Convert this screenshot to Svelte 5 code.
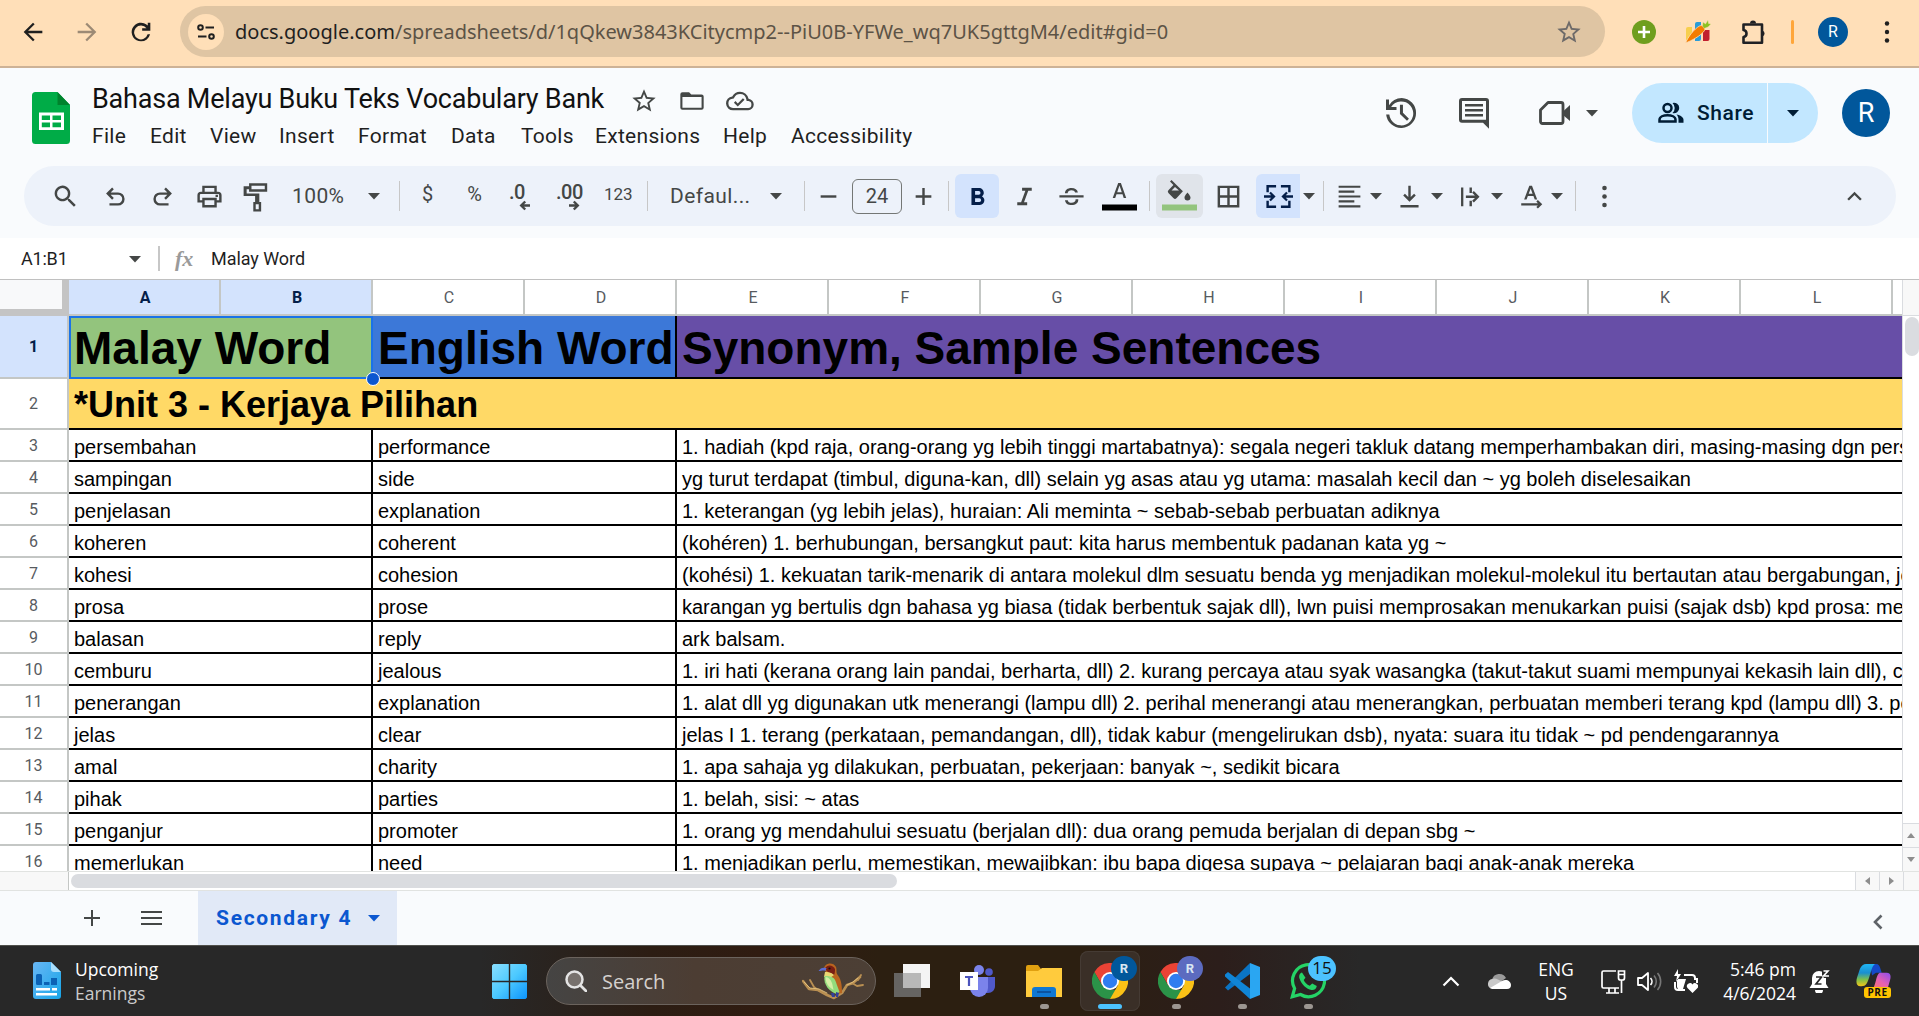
<script>
  const menus = ['File', 'Edit', 'View', 'Insert', 'Format', 'Data', 'Tools', 'Extensions', 'Help', 'Accessibility'];
  const columns = ['A', 'B', 'C', 'D', 'E', 'F', 'G', 'H', 'I', 'J', 'K', 'L'];
  const rows = [
    ['persembahan', 'performance', '1. hadiah (kpd raja, orang-orang yg lebih tinggi martabatnya): segala negeri takluk datang memperhambakan diri, masing-masing dgn perse'],
    ['sampingan', 'side', 'yg turut terdapat (timbul, diguna-kan, dll) selain yg asas atau yg utama: masalah kecil dan ~ yg boleh diselesaikan'],
    ['penjelasan', 'explanation', '1. keterangan (yg lebih jelas), huraian: Ali meminta ~ sebab-sebab perbuatan adiknya'],
    ['koheren', 'coherent', '(kohéren) 1. berhubungan, bersangkut paut: kita harus membentuk padanan kata yg ~'],
    ['kohesi', 'cohesion', '(kohési) 1. kekuatan tarik-menarik di antara molekul dlm sesuatu benda yg menjadikan molekul-molekul itu bertautan atau bergabungan, je'],
    ['prosa', 'prose', 'karangan yg bertulis dgn bahasa yg biasa (tidak berbentuk sajak dll), lwn puisi memprosakan menukarkan puisi (sajak dsb) kpd prosa: mem'],
    ['balasan', 'reply', 'ark balsam.'],
    ['cemburu', 'jealous', '1. iri hati (kerana orang lain pandai, berharta, dll) 2. kurang percaya atau syak wasangka (takut-takut suami mempunyai kekasih lain dll), ce'],
    ['penerangan', 'explanation', '1. alat dll yg digunakan utk menerangi (lampu dll) 2. perihal menerangi atau menerangkan, perbuatan memberi terang kpd (lampu dll) 3. pe'],
    ['jelas', 'clear', 'jelas I 1. terang (perkataan, pemandangan, dll), tidak kabur (mengelirukan dsb), nyata: suara itu tidak ~ pd pendengarannya'],
    ['amal', 'charity', '1. apa sahaja yg dilakukan, perbuatan, pekerjaan: banyak ~, sedikit bicara'],
    ['pihak', 'parties', '1. belah, sisi: ~ atas'],
    ['penganjur', 'promoter', '1. orang yg mendahului sesuatu (berjalan dll): dua orang pemuda berjalan di depan sbg ~'],
    ['memerlukan', 'need', '1. menjadikan perlu, memestikan, mewajibkan: ibu bapa digesa supaya ~ pelajaran bagi anak-anak mereka']
  ];
</script>

{#snippet caret()}
  <svg class="caret" viewBox="0 0 14 14"><path d="M1 4h12l-6 6.500z" /></svg>
{/snippet}

{#snippet chromeIcon()}
  <svg class="app" viewBox="0 0 36 36">
    <path fill="#ea4335" d="M2.400 9 10.200 22.500 18 9h15.600A18 18 0 0 0 2.400 9z" />
    <path fill="#2b9348" d="M2.400 9 10.200 22.500 18 27h7.800L18 36A18 18 0 0 1 2.400 9z" />
    <path fill="#fbc116" d="M18 9h15.600A18 18 0 0 1 18 36l7.800-13.500z" />
    <circle cx="18" cy="18" r="9" fill="#fff" /><circle cx="18" cy="18" r="7.200" fill="#2f7df0" />
  </svg>
{/snippet}

<div class="page">
  <header class="browser">
    <svg class="b-ic" viewBox="0 0 24 24"><path d="M20 11H7.800l5.600-5.600L12 4l-8 8 8 8 1.400-1.400L7.800 13H20z" /></svg>
    <svg class="b-ic dim" viewBox="0 0 24 24"><path d="M4 11h12.200l-5.600-5.600L12 4l8 8-8 8-1.400-1.400 5.600-5.600H4z" /></svg>
    <svg class="b-ic" viewBox="0 0 24 24"><path d="M12 20a8 8 0 1 1 5.800-13.500V4H20v7h-7V8.800h3.700A5.900 5.900 0 1 0 17.700 14h2.100A8 8 0 0 1 12 20z" /></svg>
    <div class="omnibox">
      <span class="site">
        <svg viewBox="0 0 20 20"><g fill="none" stroke="#202020" stroke-width="2"><circle cx="4.500" cy="5.500" r="2.300" /><circle cx="15.500" cy="14.500" r="2.300" /><path d="M9.500 5.500H18M2 14.500h8.500" /></g></svg>
      </span>
      <span class="url"><b>docs.google.com</b>/spreadsheets/d/1qQkew3843KCitycmp2--PiU0B-YFWe_wq7UK5gttgM4/edit#gid=0</span>
      <svg class="star" viewBox="0 0 24 24"><path d="M22 9.240l-7.190-.620L12 2 9.190 8.630 2 9.240l5.460 4.730L5.820 21 12 17.270 18.180 21l-1.630-7.030zM12 15.400l-3.760 2.270 1-4.280-3.320-2.880 4.380-.380L12 6.100l1.710 4.040 4.380.380-3.320 2.880 1 4.280z" /></svg>
    </div>
    <svg class="e-plus" viewBox="0 0 24 24"><circle cx="12" cy="12" r="12" fill="#6f9e1e" /><path d="M12 6v12M6 12h12" stroke="#fff" stroke-width="2.600" /></svg>
    <svg class="e-car" viewBox="0 0 26 24">
      <path fill="#f7cf4e" d="M1 9a2 2 0 0 1 2-2h4v13H1z" /><path fill="#2a9cd8" d="M10 4a2 2 0 0 1 2-2h4v17a2 2 0 0 1-2 2h-4z" /><path fill="#c11f2e" d="M18 10h6.500v9a2 2 0 0 1-2 2H18z" />
      <path fill="#f57c00" stroke="#fde0ba" stroke-width=".8" d="M.500 23C3 17 9 9 14.500 6c3-1.500 6.500 1.500 5 4.500C16.500 15.500 6 21 .500 23z" /><path fill="#8cc220" stroke="#fde0ba" stroke-width=".4" d="M17.500 6l.500-4 2.500 2L23 0l.500 3.500L26 4l-3 3-4 1.500z" />
    </svg>
    <svg class="e-puz" viewBox="0 0 26 26"><path d="M2.500 5.500H21v18.300H2.500V18c4-.500 4-6.500 0-7z" fill="none" stroke="#202124" stroke-width="2.600" stroke-linejoin="round" /><path fill="#202124" d="M9 4.500a3 3 0 0 1 6 0zM21.500 11.500a3.200 3.200 0 0 1 0 6z" /></svg>
    <i class="b-sep"></i>
    <span class="b-ava">R</span>
    <svg class="b-dots" viewBox="0 0 6 28"><circle cx="3" cy="5.500" r="2.200" /><circle cx="3" cy="14" r="2.200" /><circle cx="3" cy="22.500" r="2.200" /></svg>
  </header>

  <section class="docs">
    <svg class="logo" viewBox="0 0 38 52"><path fill="#00ac47" d="M3.500 0H25.500L38 13v35.500a3.500 3.500 0 0 1-3.500 3.500h-31A3.500 3.500 0 0 1 0 48.500v-45A3.500 3.500 0 0 1 3.500 0z" /><path fill="#00832d" d="M25.500 0 38 13H25.500z" /><path fill="#fff" d="M7 20.500h25v17.500H7z" /><path fill="#00ac47" d="M9.800 23.400h8.200v4.700H9.800zM20.500 23.400h8.500v4.700h-8.500zM9.800 30.500h8.200v4.700H9.800zM20.500 30.500h8.500v4.700h-8.500z" /></svg>
    <div class="naming">
      <div class="title-row">
        <h1>Bahasa Melayu Buku Teks Vocabulary Bank</h1>
        <svg viewBox="0 0 24 24"><path d="M22 9.240l-7.190-.620L12 2 9.190 8.630 2 9.240l5.460 4.730L5.820 21 12 17.270 18.180 21l-1.630-7.030zM12 15.400l-3.760 2.270 1-4.280-3.320-2.880 4.380-.380L12 6.100l1.710 4.040 4.380.380-3.320 2.880 1 4.280z" /></svg>
        <svg viewBox="0 0 24 24"><path d="M9.500 4.500H3.800A1.800 1.800 0 0 0 2 6.300v11.400a1.800 1.800 0 0 0 1.800 1.800h16.400a1.800 1.800 0 0 0 1.800-1.800V8.200a1.800 1.800 0 0 0-1.800-1.800h-8.800zM20.200 17.700H3.800V8.500h16.400z" /></svg>
        <svg class="wide" viewBox="0 0 24 24"><path d="M19.350 10.040A7.490 7.490 0 0 0 12 4a7.500 7.500 0 0 0-6.650 4.040A6 6 0 0 0 6 20h13a5 5 0 0 0 .350-9.960zM19 18H6a4 4 0 0 1-.440-7.970l1.070-.110.500-.950A5.490 5.490 0 0 1 12 6a5.500 5.500 0 0 1 5.390 4.430l.300 1.500 1.530.110A3 3 0 0 1 19 18zm-8.900-3.900-2-2-1.300 1.400 3.300 3.300 5.800-5.800-1.400-1.400z" /></svg>
      </div>
      <nav>{#each menus as m}<span>{m}</span>{/each}</nav>
    </div>
    <div class="actions">
      <svg class="a-ic" viewBox="0 0 24 24"><path d="M12.500 2A10 10 0 0 0 4 6.900V3H2v7h7V8H5.400A8 8 0 1 1 4.200 13H2.100A10 10 0 1 0 12.500 2zM11.300 6.500v6.200l4.700 4.500 1.300-1.400-4-3.900V6.500z" /></svg>
      <svg class="a-ic" viewBox="0 0 24 24"><path d="M4 2a2 2 0 0 0-2 2v12.500a2 2 0 0 0 2 2h14l4 4V4a2 2 0 0 0-2-2zm0 2h16v12.500H4zM6 6h12v1.700H6zm0 3.300h12v1.700H6zm0 3.300h12v1.700H6z" /></svg>
      <svg class="a-meet" viewBox="0 0 32 26"><path d="M9 2.500h13a2 2 0 0 1 2 2v17a2 2 0 0 1-2 2H3.500a2 2 0 0 1-2-2V10z" fill="none" stroke="#444746" stroke-width="2.800" stroke-linejoin="round" /><path d="M24 11.500 31 5v16l-7-6z" /></svg>
      {@render caret()}
      <div class="share">
        <span class="share-main">
          <svg viewBox="0 0 26 22"><g fill="none" stroke="#001d35" stroke-width="2.500"><circle cx="9.500" cy="6" r="4" /><path d="M1.500 19.500v-1.700c0-3 4-4.500 8-4.500s8 1.500 8 4.500v1.700z" /></g><path fill="#001d35" d="M14.500.900a5.300 5.300 0 1 1 0 10.200 7 7 0 0 0 0-10.200zM18.500 12.400c4 .8 7 2.600 7 5.300v3h-5v-3c0-2-.7-4-2-5.300z" /></svg>
          Share
        </span>
        <span class="share-more">{@render caret()}</span>
      </div>
      <span class="avatar">R</span>
    </div>
  </section>

  <div class="toolbar">
    <svg class="ic" viewBox="0 0 24 24"><path d="M15.500 14h-.790l-.280-.270a6.500 6.500 0 1 0-.700.700l.270.280v.790l5 4.990L20.490 19zm-6 0a4.500 4.500 0 1 1 0-9 4.500 4.500 0 0 1 0 9z" /></svg>
    <svg class="ic" viewBox="0 0 24 24"><path d="M7 19.500v-2h7.100a3.400 3.400 0 0 0 0-6.900H8l2.600 2.600-1.400 1.400-5-5 5-5 1.400 1.400L8 8.600h6.100a5.400 5.400 0 0 1 0 10.900z" /></svg>
    <svg class="ic" viewBox="0 0 24 24"><path d="M17 19.500v-2H9.900a3.400 3.400 0 0 1 0-6.900H16l-2.600 2.600 1.400 1.400 5-5-5-5-1.400 1.400L16 8.600H9.900a5.400 5.400 0 0 0 0 10.900z" /></svg>
    <svg class="ic" viewBox="0 0 24 24"><path d="M19 8h-1V3H6v5H5a3 3 0 0 0-3 3v6h4v4h12v-4h4v-6a3 3 0 0 0-3-3zM8 5h8v3H8zm8 12.500V19H8v-4h8zm2-2.500v-2H6v2H4v-4c0-.600.400-1 1-1h14c.600 0 1 .400 1 1v4zM17 10.500h2v2h-2z" /></svg>
    <svg class="ic" viewBox="0 0 24 24"><path d="M7 1.500h15v7H7V6.500H5v3.500h10.500v7h1.500v8h-6.500v-8H12v-5H2.500V4H7zM9 3.500v3h11v-3zm3.500 15.500v4h2.500v-4z" transform="translate(.5 -.5)" /></svg>
    <span class="zoom">100%</span>
    {@render caret()}
    <i class="sep"></i>
    <span class="num c">$</span>
    <span class="num c">%</span>
    <svg class="ic" viewBox="0 0 29 29"><text x="2" y="16.500" class="dec">.0</text><path d="M23 23.500H14m4.200-4-4 4 4 4" fill="none" stroke="#444746" stroke-width="2.400" /></svg>
    <svg class="ic" viewBox="0 0 29 29"><text x="1" y="16.500" class="dec">.00</text><path d="M14 23.500h9m-4.200-4 4 4-4 4" fill="none" stroke="#444746" stroke-width="2.400" /></svg>
    <span class="num s">123</span>
    <i class="sep"></i>
    <span class="zoom">Defaul...</span>
    {@render caret()}
    <i class="sep"></i>
    <svg class="ic" viewBox="0 0 24 24"><path d="M5.500 11h13v2h-13z" /></svg>
    <span class="size">24</span>
    <svg class="ic" viewBox="0 0 24 24"><path d="M5.500 11H11V5h2v6h5.500v2H13v6h-2v-6H5.500z" /></svg>
    <i class="sep"></i>
    <span class="btn on"><svg class="ic" viewBox="0 0 24 24"><path d="M15.600 11.800c1-.7 1.600-1.800 1.600-2.800 0-2.300-1.700-4-4-4H7v14h7c2.100 0 3.700-1.700 3.700-3.800 0-1.500-.9-2.800-2.100-3.400zM10 7.500h3a1.500 1.500 0 0 1 0 3h-3zm3.500 9H10v-3h3.500a1.500 1.500 0 0 1 0 3z" /></svg></span>
    <svg class="ic" viewBox="0 0 24 24"><path d="M10 4.800v2.500h2.700L9.200 16.700H6v2.500h8.200v-2.500h-2.600l3.500-9.400H18V4.800z" /></svg>
    <svg class="ic" viewBox="0 0 24 24"><path d="M2 11h20v1.900H2zM6.600 9.400h2.200C8.900 7.600 10.200 6.800 12 6.800c1.500 0 2.600.7 3 1.900h2.300C16.900 6.200 14.900 4.900 12 4.900c-3.300 0-5.500 1.800-5.400 4.500zM15.400 14.300c.2 1.700-1.300 2.900-3.300 2.900-1.700 0-2.900-.8-3.200-2.200H6.600c.3 2.600 2.500 4.100 5.500 4.100 3.300 0 5.800-1.800 5.500-4.800z" /></svg>
    <svg class="col" viewBox="0 0 35 35"><path d="M16.200 4h2.700l5.300 15h-2.500l-1.200-3.700h-6L13.200 19h-2.500zm-1 9.200h4.600l-2.300-6.800z" /><path fill="#000" d="M0 25.500h35v6H0z" /></svg>
    <i class="sep"></i>
    <span class="btn fill"><svg class="col" viewBox="0 0 35 35"><path d="M9.500 1 8 2.600l3.400 3.400-5 5.200a2 2 0 0 0 0 2.700l5.200 5.300a2 2 0 0 0 2.800 0l6.500-6.900zM9.500 11.500l3.500-3.500 4 3.500zM25.500 13.500s-3 3.300-3 5a3 3 0 0 0 6 0c0-1.700-3-5-3-5z" /><path fill="#93c47d" d="M0 25.500h35v6H0z" /></svg></span>
    <svg class="ic" viewBox="0 0 24 24"><path d="M3 3v18h18V3zm8 16H5v-6h6zm0-8H5V5h6zm8 8h-6v-6h6zm0-8h-6V5h6z" /></svg>
    <span class="btn on flat"><svg class="ic" viewBox="0 0 24 24"><path d="M2 2.500h8v2H4v4H2zM14 2.500h8v6h-2v-4h-6zM2 15.500h2v4h6v2H2zM20 15.500h2v6h-8v-2h6zM0 11h6L4.300 9.300l1.300-1.300 4 4-4 4-1.300-1.300L6 13H0zM24 11h-6l1.700-1.700L18.400 8l-4 4 4 4 1.300-1.300L18 13h6z" /></svg></span>
    {@render caret()}
    <i class="sep"></i>
    <svg class="ic" viewBox="0 0 24 24"><path d="M3 3h18v1.800H3zm0 4.100h13v1.800H3zm0 4h18v1.800H3zm0 4h13v1.800H3zm0 4.100h18V21H3z" /></svg>
    {@render caret()}
    <svg class="ic" viewBox="0 0 24 24"><path d="M4.500 19h15v2h-15zM11 3h2v9.500l2.800-2.800 1.400 1.400L12 16.300l-5.200-5.200 1.400-1.400 2.800 2.800z" /></svg>
    {@render caret()}
    <svg class="ic" viewBox="0 0 24 24"><path d="M5 4.500h1.900v15.500H5zM12 4.500h2v4.500h-2zm0 11h2v4.500h-2zM9 11.200h7.500l-2.300-2.300 1.400-1.400L20.300 12.200l-4.700 4.700-1.400-1.400 2.300-2.300H9z" /></svg>
    {@render caret()}
    <svg class="ic" viewBox="0 0 24 24"><path d="M10.200 3h2.200l4.300 11.500h-2l-1.100-3H9l-1.100 3h-2zm-.5 6.700h3.200l-1.600-4.400zM3.500 17.500h13.800l-1.300-1.300 1.300-1.300 3.600 3.500-3.600 3.600-1.300-1.300 1.300-1.300H3.500z" /></svg>
    {@render caret()}
    <i class="sep"></i>
    <svg class="ic" viewBox="0 0 24 24"><circle cx="12" cy="5" r="1.900" /><circle cx="12" cy="12" r="1.900" /><circle cx="12" cy="19" r="1.900" /></svg>
    <svg class="ic" viewBox="0 0 24 24"><path d="M12 8l-6 6 1.400 1.400L12 10.800l4.600 4.600L18 14z" /></svg>
  </div>

  <div class="formula">
    <span class="ref">A1:B1</span>{@render caret()}<i></i><em>fx</em><span class="value">Malay Word</span>
  </div>

  <main class="sheet">
    <div class="grid">
      <div class="row heads">
        <div class="corner"></div>
        {#each columns as c, i}<div class="head" class:sel={i < 2}>{c}</div>{/each}
      </div>
      <div class="row r1">
        <div class="rn sel">1</div>
        <div class="cell two green">Malay Word<i class="handle"></i></div>
        <div class="cell two blue">English Word</div>
        <div class="cell rest purple">Synonym, Sample Sentences</div>
      </div>
      <div class="row r2"><div class="rn">2</div><div class="cell rest">*Unit 3 - Kerjaya Pilihan</div></div>
      {#each rows as r, i}
        <div class="row">
          <div class="rn">{i + 3}</div>
          <div class="cell two">{r[0]}</div>
          <div class="cell two">{r[1]}</div>
          <div class="cell rest">{r[2]}</div>
        </div>
      {/each}
    </div>
    <aside class="vbar">
      <div class="vtop"></div>
      <div class="vthumb"></div>
      <div class="vbtn"><svg viewBox="0 0 8 5"><path d="M4 0l4 5H0z" /></svg></div>
      <div class="vbtn"><svg viewBox="0 0 8 5"><path d="M4 5l4-5H0z" /></svg></div>
    </aside>
  </main>
  <div class="hbar">
    <div class="hleft"></div>
    <div class="htrack"><div class="hthumb"></div></div>
    <div class="hbtn"><svg viewBox="0 0 5 8"><path d="M0 4l5-4v8z" /></svg></div>
    <div class="hbtn"><svg viewBox="0 0 5 8"><path d="M5 4L0 0v8z" /></svg></div>
    <div class="hend"></div>
  </div>

  <footer class="tabs">
    <svg class="t-plus" viewBox="0 0 16 16"><path d="M0 7h7V0h2v7h7v2H9v7H7V9H0z" /></svg>
    <svg class="t-menu" viewBox="0 0 21 14"><path d="M0 0h21v2H0zm0 6h21v2H0zm0 6h21v2H0z" /></svg>
    <div class="tab"><span>Secondary 4</span>{@render caret()}</div>
    <svg class="t-back" viewBox="0 0 10 16"><path d="M8.500 1.500 2 8l6.500 6.500" fill="none" stroke="#5f6368" stroke-width="2.600" /></svg>
  </footer>

  <div class="taskbar">
    <svg class="widget" viewBox="0 0 28 37">
      <defs><linearGradient id="wd" x2="1" y2="1"><stop stop-color="#69b7f5" /><stop offset="1" stop-color="#16a5e8" /></linearGradient></defs>
      <path fill="url(#wd)" d="M3 0h15l10 10v24a3 3 0 0 1-3 3H3a3 3 0 0 1-3-3V3a3 3 0 0 1 3-3z" /><path fill="#a9defc" d="M18 0l10 10h-7a3 3 0 0 1-3-3z" />
      <path fill="#0b62b5" d="M3 13.500a1.500 1.500 0 0 1 1.500-1.500h3A1.500 1.500 0 0 1 9 13.500V23H4.500A1.500 1.500 0 0 1 3 21.500zM11 20h5.500v3H11zm7-4h6v7h-6z" /><path fill="#fff" d="M3 26h14v2.600H3zm16 0h5v2.600h-5zM3 31h21v2.600H3z" />
    </svg>
    <div class="news"><span>Upcoming</span><span class="soft">Earnings</span></div>
    <svg class="win" viewBox="0 0 35 35">
      <defs><linearGradient id="wn" x2="1" y2="1"><stop stop-color="#8adfff" /><stop offset=".5" stop-color="#4cc9ff" /><stop offset="1" stop-color="#0c93fb" /></linearGradient></defs>
      <path fill="url(#wn)" d="M1.500 0H16.800v16.800H0V1.500zM18.200 0h15.300L35 1.500v15.300H18.200zM0 18.200h16.800V35H1.500L0 33.500zM18.200 18.200H35v15.300L33.500 35H18.200z" />
    </svg>
    <div class="search">
      <svg class="mag" viewBox="0 0 22 22"><circle cx="9.500" cy="9.500" r="8" fill="#77716d" stroke="#e4e4e4" stroke-width="2.500" /><path d="M15.500 15.500 21 21" stroke="#e4e4e4" stroke-width="2.800" stroke-linecap="round" /></svg>
      <span>Search</span>
      <svg class="bird" viewBox="0 0 62 37">
        <g fill="none" stroke="#b98f52" stroke-linecap="round" stroke-linejoin="round"><path stroke-width="2.600" d="M1 18l6 8 9 1 9 5 7 3 8-5 5-8 6-2 7-6" /><path stroke-width="1.800" d="M8 17l4 7 4 3M50 20l5 3 6-1M56 17l3-5" /><path stroke="#e4c37f" stroke-width=".9" d="M2 19l6 6 9 1 8 4M45 22l6-3 5-4" /></g>
        <path fill="#b9651f" d="M22 6c0-6 9-8 12-2 1 3 0 5 1 7 4 5 5 10 5 19l-5 1-6-14z" />
        <path fill="#7a1e13" d="M23 6c2-5 8-4 10 0 0 2 0 4-1 6l-6-3z" />
        <path fill="#5b6dd6" d="M16.500 8c2-3 4-4 8-3l-1 3c-2-1-4 0-7 0z" />
        <path fill="#e9d873" d="M23 9c3 0 6 0 9 3l-4 3-6-1z" />
        <path fill="#93dc7c" d="M22.500 13c4 0 9 0 11 5l4 11-3 2C28 29 21 22 22.500 13z" />
        <path fill="#d5f0a5" d="M23.500 14c3 0 6 3 7 8l1 5c-5-3-8-7-8-13z" />
        <path fill="#32429a" d="M29 30h3l1 4h-3zM34 29l3 1-1 4h-2z" /><circle cx="27.500" cy="5.500" r="1.100" fill="#111" />
      </svg>
    </div>
    <svg class="app" viewBox="0 0 36 36"><path fill="#666462" d="M0 10h27v24H0z" /><path fill="#f4f4f4" d="M9 1h27v24H9z" /><path fill="#b8b8b8" d="M9 10h18v15H9z" /></svg>
    <svg class="app" viewBox="0 0 36 36"><circle cx="29" cy="9" r="3.800" fill="#5059c9" /><path fill="#5059c9" d="M25 14h10v9c0 4-3 7-7 7h-3z" /><circle cx="19" cy="7" r="5" fill="#7b83eb" /><path fill="#7b83eb" d="M10 14h18v11a9 9 0 0 1-18 0z" /><path fill="#fff" d="M0 9h18v18H0z" /><path d="M5 14h8M9 14v9" stroke="#4b53bc" stroke-width="2.200" /></svg>
    <div class="slot run"><svg class="app" viewBox="0 0 36 36"><path fill="#e0a010" d="M0 4a2 2 0 0 1 2-2h10l3 4h21v8H0z" /><path fill="#ffcb3d" d="M0 8h12l4-3h20v29H0z" /><path fill="#0f78d4" d="M6 34V27a3 3 0 0 1 3-3h18a3 3 0 0 1 3 3v7z" /><path stroke="#0a4a94" stroke-width="1.600" d="M11 29h14" /></svg></div>
    <div class="slot run active">{@render chromeIcon()}<b class="badge">R</b></div>
    <div class="slot run">{@render chromeIcon()}<b class="badge violet">R</b></div>
    <div class="slot run"><svg class="app" viewBox="0 0 36 36"><path fill="#0a74c4" d="M1 24.500 26 0v11L4 27.500z" /><path fill="#1085d6" d="M1 11.500 4 9l22 16.500V36L1 13.500z" /><path fill="#2aa6f2" d="M26 0l10 4v28l-10 4z" /></svg></div>
    <div class="slot run"><svg class="app" viewBox="0 0 36 36"><path fill="none" stroke="#25d366" stroke-width="3.200" d="M2.300 33.700l2.300-8.200A16 16 0 1 1 10.500 31.500z" /><path fill="#25d366" d="M12 9.500c-2 .5-3.500 3-2.500 6 2 6 7 10.500 12 11.500 3 .4 5-1.500 5.300-4l-4.600-2.600-2.500 2.300c-3-1.200-5-3.300-6-5.700l1.800-2.200z" /></svg><b class="badge count">15</b></div>
    <svg class="up" viewBox="0 0 18 11"><path d="M1.500 9.500 9 2l7.500 7.500" fill="none" stroke="#fff" stroke-width="2.200" /></svg>
    <svg class="cloud" viewBox="0 0 24 16"><path fill="#9a9a9a" d="M5 7a7.500 7.500 0 0 1 14-2l-7 5z" /><path fill="#c9c9c9" d="M5 6a5 5 0 0 0-1 9.500L16 9l-5-2.500A8 8 0 0 0 5 6z" /><path fill="#fff" d="M3 15l12-7c4-2.500 9 0 9 4a4 4 0 0 1-4 4H5z" /></svg>
    <div class="lang">ENG<br />US</div>
    <svg class="tray" viewBox="0 0 25 25"><path d="M15 2H2.500A1.500 1.500 0 0 0 1 3.500v14A1.500 1.500 0 0 0 2.500 19H18M5 24h13M8 19v5M14 19v5M17.500 2h6v7a2 2 0 0 1-2 2h-2a2 2 0 0 1-2-2zM17.500 5.500h6M20.500 11v13" fill="none" stroke="#fff" stroke-width="1.700" /></svg>
    <svg class="tray" viewBox="0 0 25 25"><path d="M1 9h4l6-5v17l-6-5H1z" fill="none" stroke="#fff" stroke-width="1.800" stroke-linejoin="round" /><path d="M13.500 9a5 5 0 0 1 0 7" fill="none" stroke="#fff" stroke-width="1.700" /><path d="M17 6.500a9 9 0 0 1 0 12M20.500 4a13 13 0 0 1 0 17" fill="none" stroke="#777" stroke-width="1.600" /></svg>
    <svg class="tray" viewBox="0 0 25 25"><path d="M11 6h8a3 3 0 0 1 3 3v2M2 13v5a3 3 0 0 0 3 3h7M22 10h2v4" fill="none" stroke="#fff" stroke-width="2" /><path fill="#fff" d="M4 10h9l-3 10H5l-1-2zM5 0 1 7h3l-1 6 5-8H5zM19.500 24l-5-5a3 3 0 0 1 5-3.600 3 3 0 0 1 5 3.600z" /></svg>
    <div class="clock">5:46 pm<br />4/6/2024</div>
    <svg class="bell" viewBox="0 0 21 24"><path fill="#fff" d="M3 9a7 7 0 0 1 14 0v6l2.500 4H.500L3 15zM6 21h8a4 4 0 0 1-8 0z" /><path fill="#272727" d="M13 0h8v9h-6l-2-3z" /><path d="M7 8h5.500l-5.500 7h5.500" fill="none" stroke="#272727" stroke-width="1.700" /><path d="M14.500 2h4.500l-4.500 5H20" fill="none" stroke="#fff" stroke-width="1.600" /></svg>
    <div class="pilot">
      <svg viewBox="0 0 35 30">
        <defs>
          <linearGradient id="pa" x2="0" y2="1"><stop stop-color="#20b6f5" /><stop offset=".4" stop-color="#1a8fd0" /><stop offset=".7" stop-color="#7fc04a" /><stop offset="1" stop-color="#f5c518" /></linearGradient>
          <linearGradient id="pb" x1="1" x2=".2" y2="1"><stop stop-color="#8a4df0" /><stop offset=".5" stop-color="#e760b0" /><stop offset="1" stop-color="#ff7a5c" /></linearGradient>
        </defs>
        <path fill="#1549c8" d="M14 0h6c3 0 4 2 5 6l1 3h-6l-4 3z" /><path fill="url(#pa)" d="M10 0h9c-3 2-4 8-6 14s-3 9-8 9H4c-4 0-5-4-3.500-9l3-9C5 1.500 7 0 10 0z" />
        <path fill="url(#pb)" d="M24 9h7c4 0 5 3 3.500 8l-2 7c-2 4-4 5-8 5H13c4-1 5-5 7-12 1-4 2-7 4-8z" />
      </svg><b>PRE</b>
    </div>
  </div>
</div>

<style>
  :global(body) { margin: 0; overflow: hidden; }
  .page { width: 1919px; height: 1016px; display: flex; flex-direction: column; background: #f9fbfd; font-family: Roboto, sans-serif; color: #1f1f1f; overflow: hidden; }
  svg { display: block; flex: none; }
  .page * { box-sizing: border-box; }

  .browser { height: 68px; flex: none; display: flex; align-items: center; background: #ffdfb8; border-bottom: 2px solid #cdb296; padding: 0 0 3px 19px; }
  .b-ic { width: 28px; height: 28px; fill: #1f1f1f; margin-right: 26px; }
  .b-ic.dim { fill: #9c8a75; }
  .omnibox { width: 1425px; height: 51px; border-radius: 26px; background: #dfc5a3; display: flex; align-items: center; padding: 0 22px 0 8px; margin-left: -1px; }
  .site { width: 36px; height: 36px; border-radius: 50%; background: #ffdfb8; display: grid; place-items: center; margin-right: 11px; }
  .site svg { width: 20px; height: 20px; }
  .url { flex: 1; font: 20px "Noto Sans", sans-serif; color: #5c5346; white-space: nowrap; }
  .url b { font-weight: 400; color: #1f1f1f; }
  .star { width: 28px; height: 28px; fill: #6d6a69; }
  .e-plus { width: 24px; height: 24px; margin-left: 27px; }
  .e-car { width: 26px; height: 24px; margin-left: 29px; }
  .e-puz { width: 26px; height: 26px; margin-left: 30px; }
  .b-sep { width: 3px; height: 24px; background: #ffa63a; border-radius: 2px; margin-left: 24px; }
  .b-ava { width: 30px; height: 30px; border-radius: 50%; background: #01579b; color: #fff; font-size: 16px; display: grid; place-items: center; margin-left: 24px; }
  .b-dots { width: 6px; height: 28px; margin-left: 36px; fill: #1f1f1f; }

  .docs { height: 98px; flex: none; display: flex; }
  .logo { width: 38px; height: 52px; margin: 24px 22px 0 32px; }
  .naming { display: flex; flex-direction: column; flex: 1; }
  .title-row { display: flex; align-items: center; height: 40px; margin-top: 11px; }
  h1 { font-weight: 400; font-size: 27px; width: 538px; margin: 0 0 1px; white-space: nowrap; letter-spacing: -.22px; color: #111; }
  .title-row svg { width: 28px; height: 28px; fill: #444746; margin: 3px 20px 0 0; }
  .title-row .wide { width: 28px; }
  nav { display: grid; grid-template-columns: 58px 60px 69px 79px 93px 70px 74px 128px 68px 130px; font-size: 21px; line-height: 34px; letter-spacing: .3px; }
  .actions { display: flex; height: 60px; margin-top: 15px; align-items: center; }
  .a-ic { width: 36px; height: 36px; fill: #444746; margin-right: 37px; }
  .a-meet { width: 32px; height: 26px; fill: #444746; margin-right: 14px; margin-left: 10px; }
  .caret { width: 14px; height: 14px; fill: #444746; align-self: center; }
  .share { width: 186px; height: 60px; border-radius: 30px; background: #c2e7ff; display: flex; margin-left: 33px; color: #001d35; font-size: 21px; font-weight: 500; overflow: hidden; }
  .share-main { width: 136px; border-right: 1px solid #f9fbfd; display: flex; align-items: center; gap: 13px; padding-left: 26px; letter-spacing: .6px; }
  .share-main svg { width: 26px; height: 22px; }
  .share-more { flex: 1; display: flex; justify-content: center; }
  .share-more .caret { fill: #001d35; }
  .avatar { width: 48px; height: 48px; border-radius: 50%; background: #01579b; color: #fff; font-size: 27px; display: grid; place-items: center; margin: 0 29px 0 24px; }

  .toolbar { height: 60px; flex: none; margin: 0 23px 12px 24px; background: #edf2fa; border-radius: 30px; padding-left: 27px; display: grid; align-items: center; color: #444746;
    grid-template-columns: 50px 47px 47px 45px 52px 75px 32px 14px 47px 47px 48px 49px 43px 23px 99px 35px 10px 38px 57px 39px 7px 55px 47px 45px 47px 7px 58px 42px 46px 21px 12px 34px 26px 35px 25px 35px 27px 33px 25px 15px 250px 50px; }
  .ic { width: 29px; height: 29px; fill: #444746; overflow: visible; }
  .dec { font: 500 20px Roboto, sans-serif; letter-spacing: -.5px; fill: #444746; }
  .sep { width: 1px; height: 30px; background: #c7c7c7; }
  .zoom { font-size: 21px; letter-spacing: .4px; white-space: nowrap; }
  .num { font-size: 20px; line-height: 24px; padding-bottom: 4px; }
  .num.c { width: 29px; text-align: center; }
  .num.s { font-size: 17px; }
  .toolbar .size { width: 50px; height: 35px; border: 1.500px solid #747775; border-radius: 6px; font-size: 20px; display: grid; place-items: center; }
  .btn { width: 44px; height: 44px; border-radius: 6px; display: grid; place-items: center; }
  .btn.on { background: #d3e3fd; }
  .btn.on .ic { fill: #041e49; }
  .btn.fill { width: 47px; background: #e0e4ea; }
  .btn.flat { border-radius: 6px 0 0 6px; }
  .col { width: 35px; height: 35px; fill: #444746; }

  .formula { height: 41px; flex: none; background: #fff; display: flex; align-items: center; font-size: 18px; }
  .ref { width: 107px; margin-left: 21px; letter-spacing: -.2px; }
  .formula i { width: 2px; height: 25px; background: #c7c7c7; margin-left: 16px; }
  .formula em { width: 36px; margin-left: 15px; font: italic bold 22px "Liberation Serif", serif; color: #9a9a9a; }
  .value { letter-spacing: -.05px; }

  .sheet { height: 592px; flex: none; display: flex; border-top: 1px solid #c0c0c0; background: #fff; }
  .grid { width: 1903px; overflow: hidden; border-right: 1px solid #dadce0; }
  .row { display: flex; height: 32px; }
  .heads { height: 36px; border-bottom: 2px solid #c4c7c5; background: #fff; }
  .corner { width: 69px; height: 36px; flex: none; background: #f8f9fa; border-right: 7px solid #c4c4c4; border-bottom: 7px solid #c4c4c4; }
  .head { width: 152px; flex: none; border-right: 2px solid #c4c7c5; padding-left: 2px; font-size: 16px; color: #575b5f; display: grid; place-items: center; }
  .head.sel { background: #d3e3fd; color: #041e49; font-weight: 700; }
  .rn { width: 69px; flex: none; border-right: 2px solid #c4c7c5; border-bottom: 2px solid #c4c7c5; display: grid; place-items: center; font-size: 16px; color: #575b5f; background: #fff; }
  .rn.sel { background: #d3e3fd; color: #041e49; font-weight: 700; }
  .cell { font-family: "Liberation Sans", Arial, sans-serif; font-size: 20px; line-height: 23px; color: #000; white-space: nowrap; flex: none; border-bottom: 2px solid #000; border-right: 2px solid #000; padding: 0 0 1px 5px; display: flex; align-items: flex-end; }
  .two { width: 304px; }
  .rest { width: 1300px; overflow: hidden; }
  .r1 { height: 63px; }
  .r1 .cell { font-size: 46px; font-weight: 700; line-height: 52px; padding-bottom: 3px; }
  .r1 .green { position: relative; background: #93c47d; border: 2px solid #1a73e8; padding: 0 0 3px 3px; }
  .handle { position: absolute; right: -9px; bottom: -9px; width: 14px; height: 14px; border-radius: 50%; background: #0b57d0; border: 1px solid #fff; z-index: 2; }
  .blue { background: #3c78d8; }
  .purple { background: #674ea7; }
  .r2 { height: 51px; }
  .r2 .cell { width: 1900px; background: #ffd966; font-size: 36px; font-weight: 700; line-height: 41px; padding-bottom: 3px; }
  .vbar { flex: 1; display: flex; flex-direction: column; }
  .vtop { height: 36px; background: #f8f8f8; border-bottom: 1px solid #dadce0; }
  .vthumb { width: 14px; height: 40px; border-radius: 8px; background: #dadce0; margin: 1px 0 467px 2px; }
  .vbtn { height: 24px; border-top: 1px solid #dadce0; background: #f8f8f8; display: grid; place-items: center; }
  .vbtn svg { width: 8px; height: 5px; fill: #8d8d8d; }
  .hbar { height: 20px; flex: none; display: flex; border-top: 1px solid #e1e3e1; border-bottom: 1px solid #e1e3e1; background: #fff; }
  .hleft { width: 69px; background: #f8f8f8; border-right: 1px solid #c4c7c5; }
  .htrack { flex: 1; padding: 2px; }
  .hthumb { width: 826px; height: 14px; border-radius: 7px; background: #dadce0; }
  .hbtn { width: 24px; border-left: 1px solid #dadce0; background: #f8f8f8; display: grid; place-items: center; }
  .hbtn svg { width: 5px; height: 8px; fill: #8d8d8d; }
  .hend { width: 16px; border-left: 1px solid #dadce0; background: #f8f8f8; }

  .tabs { height: 54px; flex: none; display: flex; align-items: center; background: #f9fbfd; fill: #444746; }
  .t-plus { width: 16px; height: 16px; margin: 0 49px 0 84px; }
  .t-menu { width: 21px; height: 14px; margin: 0 36px 0 -8px; }
  .tab { width: 199px; height: 54px; background: #e1e9f7; color: #0b57d0; font-size: 21px; font-weight: 700; letter-spacing: 1.700px; display: flex; align-items: center; padding-left: 18px; white-space: nowrap; }
  .tab span { width: 151px; }
  .tab .caret { fill: #0b57d0; }
  .t-back { width: 10px; height: 16px; margin: 8px 36px 0 auto; }

  .taskbar { height: 71px; flex: none; display: flex; align-items: center; color: #fff; font-family: "Open Sans", "Noto Sans", sans-serif; border-top: 1px solid #50504c; background: linear-gradient(90deg, #282828 0 480px, #2c1d13 650px, #301c11 760px, #2c1f11 880px 1080px, #2c1e1b 1220px, #282828 1360px); }
  .widget { width: 28px; height: 37px; margin: 0 0 2px 33px; }
  .news { margin-left: 14px; width: 417px; display: flex; flex-direction: column; font-size: 17.500px; line-height: 24px; padding-bottom: 1px; }
  .soft { color: #cbcbcb; }
  .win { width: 35px; height: 35px; }
  .search { width: 330px; height: 48px; border-radius: 24px; margin: 0 18px 0 19px; border: 1px solid #6b635d; background: linear-gradient(90deg, #454443, #4c3d33 45%, #4c3f35); display: flex; align-items: center; }
  .mag { width: 22px; height: 22px; margin-left: 18px; }
  .search span { font-size: 20px; color: #d5d1ce; margin-left: 15px; flex: 1; }
  .bird { width: 62px; height: 37px; margin-right: 11px; }
  .app { width: 36px; height: 36px; }
  .taskbar > .app { margin-right: 30px; }
  .slot { position: relative; width: 60px; height: 60px; border-radius: 8px; display: grid; place-items: center; margin: 0 6px 0 0; }
  .taskbar > .app + .slot { margin-left: -12px; }
  .slot.active { background: #3a2f27; box-shadow: inset 0 0 0 1px #453b34; }
  .slot::after { content: ""; position: absolute; left: 26px; bottom: 2px; width: 9px; height: 5px; border-radius: 3px; background: #9c9691; }
  .slot.active::after { left: 18px; width: 24px; background: #4cc2ff; }
  .badge { position: absolute; left: 31px; top: 5px; width: 26px; height: 25px; border-radius: 13px; background: #01579b; color: #d9e6f2; font: 700 13px/25px Roboto, sans-serif; text-align: center; }
  .violet { background: #5c6bc0; }
  .count { left: 30px; width: 28px; background: #4cc2ff; color: #111; font: 17px/24px "Open Sans", sans-serif; }
  .up { width: 18px; height: 11px; margin-left: 98px; }
  .cloud { width: 24px; height: 16px; margin-left: 27px; }
  .lang { width: 50px; margin-left: 20px; text-align: center; font-size: 17.500px; line-height: 24px; }
  .tray { width: 25px; height: 25px; margin-left: 11px; }
  .lang + .tray { margin-left: 20px; }
  .clock { width: 98px; text-align: right; font-size: 17.500px; line-height: 24px; white-space: nowrap; }
  .bell { width: 21px; height: 24px; margin-left: 13px; }
  .pilot { position: relative; width: 36px; height: 34px; margin-left: 26px; }
  .pilot svg { width: 35px; height: 29px; }
  .pilot b { position: absolute; left: 8px; bottom: 0; width: 27px; height: 11px; border-radius: 3px; background: #ffc400; color: #111; font: 700 10px/11px "Open Sans", sans-serif; text-align: center; letter-spacing: .5px; }
</style>
